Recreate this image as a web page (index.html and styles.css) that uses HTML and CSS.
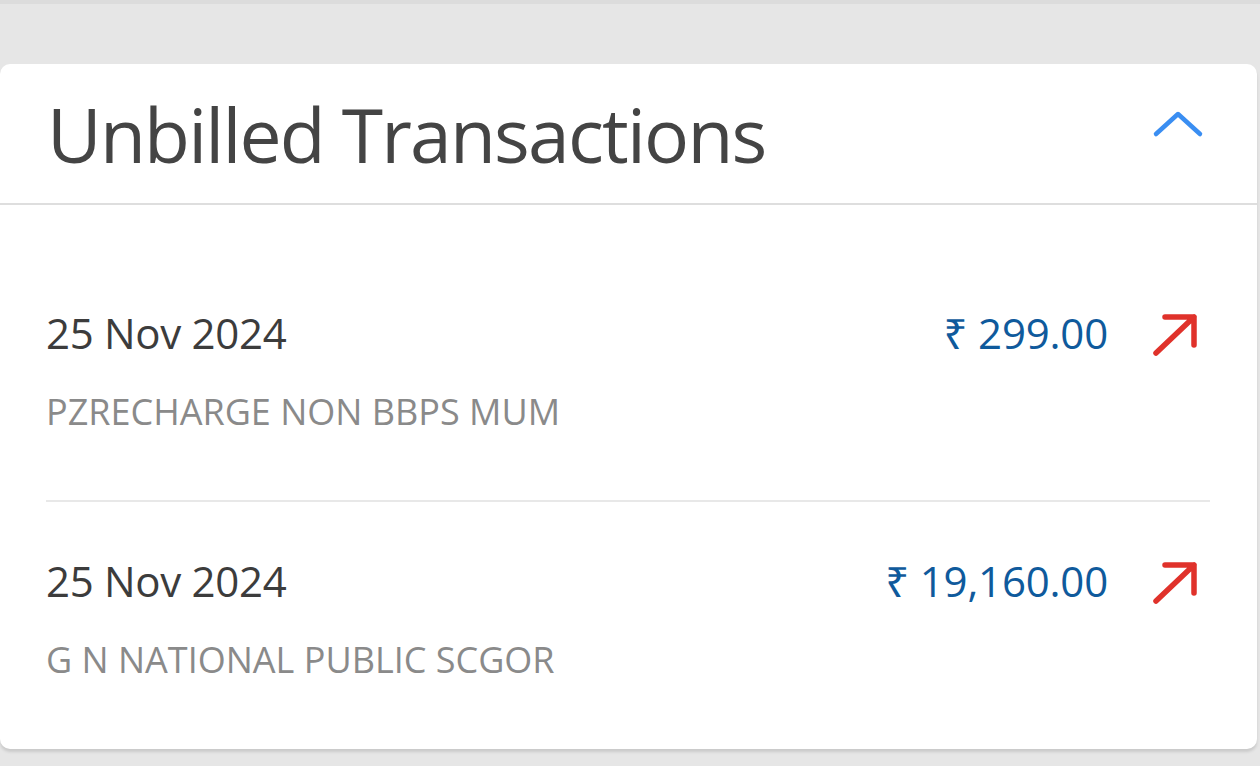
FILE: index.html
```html
<!DOCTYPE html>
<html lang="en">

<head>
  <meta charset="UTF-8">
  <meta name="viewport" content="width=device-width, initial-scale=1.0">
  <title>Unbilled Transactions</title>
  <link rel="stylesheet" href="styles.css">
</head>

<body>
  <div class="topline"></div>

  <section class="card">
    <div class="card-head">
      <h1>Unbilled Transactions</h1>
      <svg class="chevron" width="52" height="30" viewBox="0 0 52 30">
        <path d="M4 24 L26 4 L48 24" fill="none" stroke="#3a8ef2" stroke-width="4.5" stroke-linecap="round" stroke-linejoin="round" />
      </svg>
    </div>

    <ul class="txn-list">
      <li class="txn">
        <div class="txn-info">
          <div class="txn-date">25 Nov 2024</div>
          <div class="txn-desc">PZRECHARGE NON BBPS MUM</div>
        </div>
        <div class="txn-amount">₹ 299.00</div>
        <svg class="txn-arrow" width="48" height="44" viewBox="0 0 48 44">
          <path d="M4 40 L42 4 M13 4 L42 4 L42 32" fill="none" stroke="#e0322b" stroke-width="5.5" stroke-linecap="round" stroke-linejoin="round" />
        </svg>
      </li>
      <li class="txn">
        <div class="txn-info">
          <div class="txn-date">25 Nov 2024</div>
          <div class="txn-desc">G N NATIONAL PUBLIC SCGOR</div>
        </div>
        <div class="txn-amount">₹ 19,160.00</div>
        <svg class="txn-arrow" width="48" height="44" viewBox="0 0 48 44">
          <path d="M4 40 L42 4 M13 4 L42 4 L42 32" fill="none" stroke="#e0322b" stroke-width="5.5" stroke-linecap="round" stroke-linejoin="round" />
        </svg>
      </li>
    </ul>
  </section>
</body>

</html>
```

FILE: styles.css
```css
body {
  font-family: "Open Sans", "Noto Sans", sans-serif;
  margin: 0;
  padding: 0;
  background-color: #e6e6e6;
  height: 766px;
  overflow: hidden;
}

.topline {
  height: 4px;
  background-color: #dcdcdc;
  margin-bottom: 60px;
}

.card {
  width: 1257px;
  background-color: #fff;
  border-radius: 10px;
  box-shadow: 0 3px 3px rgba(0, 0, 0, 0.12);
}

.card-head {
  display: flex;
  align-items: center;
  justify-content: space-between;
  height: 139px;
  padding: 0 53px 0 47px;
  border-bottom: 2px solid #dedede;
}

.card-head h1 {
  margin: 0;
  font-size: 75px;
  font-weight: 400;
  color: #444;
  letter-spacing: -1.8px;
}

.chevron {
  margin-top: -18px;
}

.txn-list {
  list-style: none;
  margin: 0;
  padding: 49px 47px 0 46px;
}

.txn {
  display: flex;
  align-items: flex-start;
  padding: 49px 0 63px;
  border-bottom: 2px solid #e8e8e8;
}

.txn:last-child {
  border-bottom: none;
  padding-bottom: 64px;
}

.txn-info {
  flex: 1;
}

.txn-date {
  font-size: 42px;
  color: #3c3c3c;
  line-height: 60px;
  letter-spacing: -0.3px;
}

.txn-desc {
  margin-top: 24px;
  font-size: 36px;
  color: #8a8a8a;
  line-height: 50px;
}

.txn-amount {
  font-size: 42px;
  color: #0f5a9c;
  line-height: 60px;
  letter-spacing: -0.2px;
}

.txn-arrow {
  margin: 10px 10px 0 44px;
}
```
